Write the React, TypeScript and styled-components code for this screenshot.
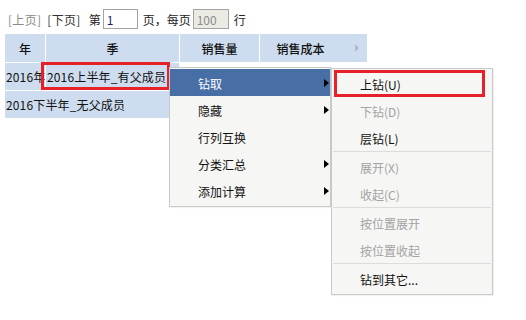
import React from "react";
import styled, { createGlobalStyle } from "styled-components";

const GlobalStyle = createGlobalStyle`
  html, body { margin: 0; padding: 0; background: #ffffff; }
  body {
    font-family: "Noto Sans CJK SC", "Liberation Sans", sans-serif;
    font-size: 12px;
    color: #000;
  }
`;

const Page = styled.div`
  position: relative;
  width: 526px;
  height: 320px;
  padding: 9px 5px 0 5px;
  box-sizing: border-box;
`;

const Toolbar = styled.div`
  display: flex;
  align-items: center;
  height: 20px;
  padding-left: 3px;
  margin-bottom: 5px;
  font-size: 12px;
  white-space: pre;
`;

const PagerLink = styled.span<{ $muted?: boolean }>`
  color: ${(p) => (p.$muted ? "#8a8a8a" : "#333")};
  margin-right: ${(p) => (p.$muted ? "6px" : "8px")};
  letter-spacing: 0.3px;
`;

const Label = styled.span`
  color: #222;
`;

const PageInput = styled.input<{ $w: number; $disabled?: boolean }>`
  box-sizing: border-box;
  width: ${(p) => p.$w}px;
  height: 20px;
  margin: 0 5px 0 2px;
  padding: 0 3px;
  border: 1px solid #a3a3a3;
  background: ${(p) => (p.$disabled ? "#ebebe4" : "#ffffff")};
  color: ${(p) => (p.$disabled ? "#8c8c8c" : "#1a1a6e")};
  font-family: "Noto Sans CJK SC", "Liberation Sans", sans-serif;
  font-size: 12px;
  outline: none;
`;

const Grid = styled.div`
  display: grid;
  grid-template-columns: 40px 133px 79px 107px;
  grid-template-rows: 28px 27px 27px;
  gap: 1px;
  width: 362px;
  background: #ffffff;
`;

const HeadCell = styled.div<{ $padRight?: number }>`
  position: relative;
  display: flex;
  align-items: center;
  justify-content: center;
  padding-right: ${(p) => p.$padRight ?? 0}px;
  background: #cddcee;
  color: #111;
  font-weight: 500;
`;

const HeadArrow = styled.span`
  position: absolute;
  right: 8px;
  top: 10px;
  width: 0;
  height: 0;
  border-left: 4px solid #b4b8be;
  border-top: 4px solid transparent;
  border-bottom: 4px solid transparent;
`;

const BodyCell = styled.div<{ $span?: number; $blue?: boolean }>`
  display: flex;
  align-items: center;
  padding-left: 1px;
  background: ${(p) => (p.$blue ? "#cddcee" : "transparent")};
  grid-column: span ${(p) => p.$span ?? 1};
  white-space: nowrap;
  font-size: 12px;
  letter-spacing: 0.15px;
  color: #111;
`;

const Marked = styled.span`
  position: relative;
  &::after {
    content: "";
    position: absolute;
    left: -6px;
    right: -4px;
    top: -6px;
    bottom: -5px;
    border: 3px solid #e6212a;
  }
`;

const Menu = styled.div<{ $left: number; $top: number }>`
  position: absolute;
  left: ${(p) => p.$left}px;
  top: ${(p) => p.$top}px;
  width: 162px;
  box-sizing: border-box;
  background: #f6f6f4;
  border: 1px solid #c9c9c9;
  padding: 1px 0 2px 0;
  box-shadow: 1px 1px 1px rgba(0, 0, 0, 0.05);
`;

const Item = styled.div<{ $active?: boolean; $disabled?: boolean }>`
  position: relative;
  height: 27px;
  display: flex;
  align-items: center;
  padding: 2px 0 0 28px;
  box-sizing: border-box;
  font-size: 12px;
  background: ${(p) => (p.$active ? "#476ea5" : "transparent")};
  color: ${(p) => (p.$active ? "#ffffff" : p.$disabled ? "#a3a3a3" : "#111")};
`;

const SubArrow = styled.span`
  position: absolute;
  right: 1px;
  top: 10px;
  width: 0;
  height: 0;
  border-left: 5px solid #000;
  border-top: 4px solid transparent;
  border-bottom: 4px solid transparent;
`;

const Highlight = styled.span`
  position: absolute;
  left: 2px;
  right: 7px;
  top: 0;
  bottom: 0;
  border: 3px solid #e6212a;
  pointer-events: none;
`;

const Separator = styled.div`
  height: 1px;
  margin: 0 1px 1px 1px;
  background: #dcdcdc;
`;

type MI = { label: string; sub?: boolean; active?: boolean; disabled?: boolean; sep?: boolean; mark?: boolean };

const mainMenu: MI[] = [
  { label: "钻取", sub: true, active: true },
  { label: "隐藏", sub: true },
  { label: "行列互换" },
  { label: "分类汇总", sub: true },
  { label: "添加计算", sub: true },
];

const drillMenu: MI[] = [
  { label: "上钻(U)", mark: true },
  { label: "下钻(D)", disabled: true },
  { label: "层钻(L)" },
  { label: "", sep: true },
  { label: "展开(X)", disabled: true },
  { label: "收起(C)", disabled: true },
  { label: "", sep: true },
  { label: "按位置展开", disabled: true },
  { label: "按位置收起", disabled: true },
  { label: "", sep: true },
  { label: "钻到其它..." },
];

function renderItems(items: MI[]) {
  return items.map((it, i) =>
    it.sep ? (
      <Separator key={i} />
    ) : (
      <Item key={i} $active={it.active} $disabled={it.disabled}>
        {it.label}
        {it.sub && <SubArrow />}
        {it.mark && <Highlight />}
      </Item>
    )
  );
}

export default function App() {
  return (
    <>
      <GlobalStyle />
      <Page>
        <Toolbar>
          <PagerLink $muted>[上页]</PagerLink>
          <PagerLink>[下页]</PagerLink>
          <Label>第</Label>
          <PageInput $w={35} defaultValue="1" />
          <Label>页，每页</Label>
          <PageInput $w={36} $disabled defaultValue="100" readOnly />
          <Label>行</Label>
        </Toolbar>
        <Grid>
          <HeadCell>年</HeadCell>
          <HeadCell>季</HeadCell>
          <HeadCell>销售量</HeadCell>
          <HeadCell $padRight={26}>
            销售成本
            <HeadArrow />
          </HeadCell>
          <BodyCell $blue>2016年</BodyCell>
          <BodyCell $blue>
            <Marked>2016上半年_有父成员</Marked>
          </BodyCell>
          <BodyCell />
          <BodyCell />
          <BodyCell $blue $span={2}>2016下半年_无父成员</BodyCell>
          <BodyCell />
          <BodyCell />
        </Grid>
        <Menu $left={169} $top={67}>{renderItems(mainMenu)}</Menu>
        <Menu $left={331} $top={68}>{renderItems(drillMenu)}</Menu>
      </Page>
    </>
  );
}
